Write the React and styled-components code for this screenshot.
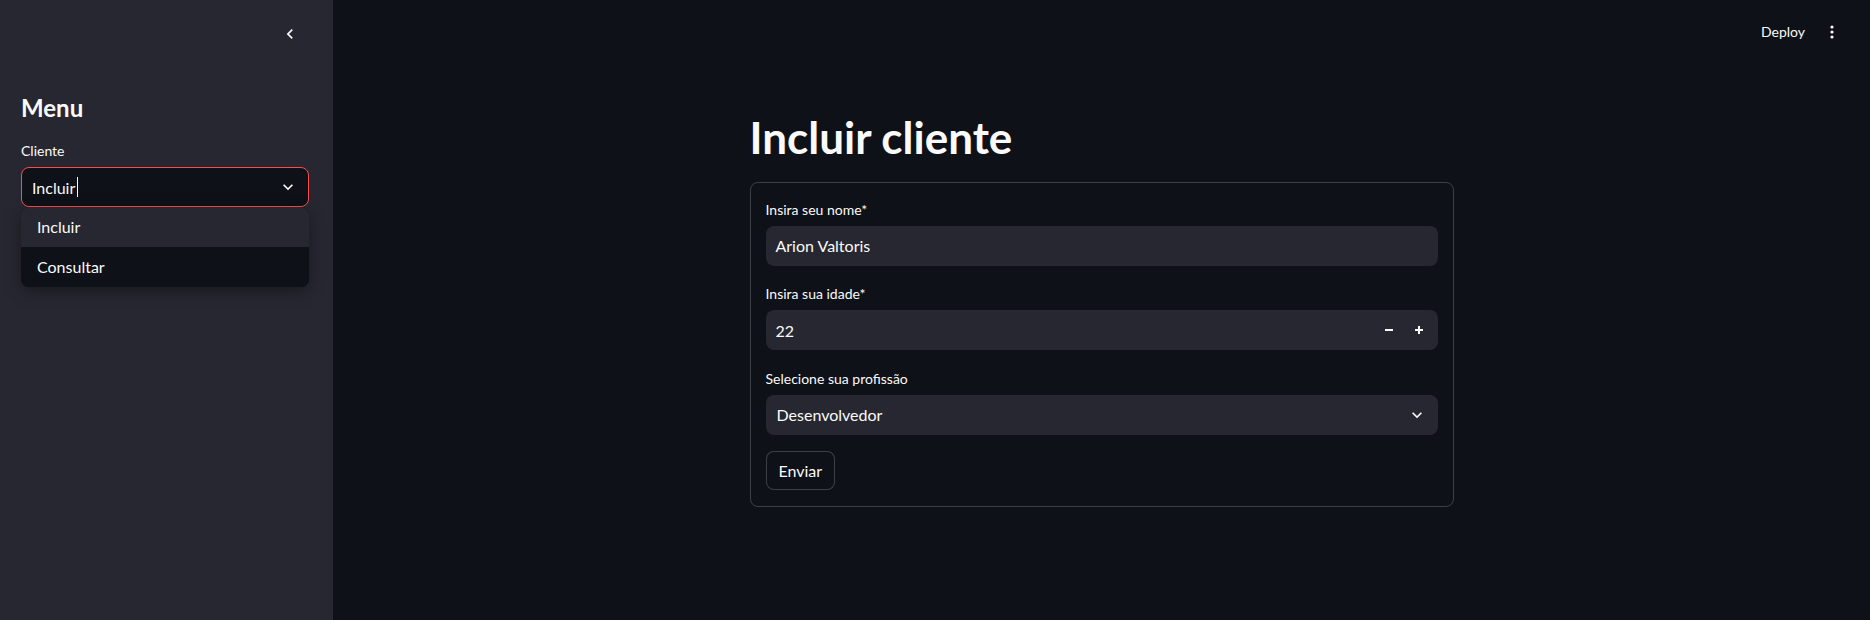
import React from 'react';
import styled, { createGlobalStyle } from 'styled-components';

const GlobalStyle = createGlobalStyle`
  html, body {
    margin: 0;
    padding: 0;
    background: #0e1117;
    color: #fafafa;
    font-family: "Source Sans Pro", Lato, "Noto Sans", sans-serif;
  }
  * {
    box-sizing: border-box;
  }
`;

const Page = styled.div`
  display: flex;
  height: 100vh;
  overflow: hidden;
`;

const Sidebar = styled.aside`
  width: 333px;
  flex-shrink: 0;
  background: #262730;
`;

const SidebarTop = styled.div`
  height: 68px;
  display: flex;
  align-items: center;
  justify-content: flex-end;
  padding-right: 29px;
`;

const IconButton = styled.button`
  width: ${(p) => p.$size || 28}px;
  height: ${(p) => p.$size || 28}px;
  display: flex;
  align-items: center;
  justify-content: center;
  padding: 0;
  border: none;
  background: transparent;
  color: #fafafa;
  cursor: pointer;
`;

const SidebarBody = styled.div`
  padding: 0 24px 0 21px;
`;

const SidebarTitle = styled.h2`
  margin: 25px 0 17px;
  font-size: 24px;
  line-height: 29px;
  font-weight: 700;
  color: #fafafa;
`;

const Label = styled.div`
  font-size: 14px;
  line-height: 24px;
  height: 24px;
  margin-bottom: 4px;
  color: #fafafa;
`;

const SelectWrap = styled.div`
  position: relative;
`;

const Field = styled.div`
  height: 40px;
  display: flex;
  align-items: center;
  padding: 0 ${(p) => (p.$select ? 10 : 9)}px 0 ${(p) => (p.$select ? 10 : 9)}px;
  border-radius: 8px;
  border: 1px solid ${(p) => (p.$focused ? '#ff4b4b' : 'transparent')};
  background: ${(p) => (p.$dark ? '#0e1117' : '#262730')};
  font-size: 16px;
  color: #fafafa;
`;

const FieldValue = styled.span`
  flex: 1;
  display: flex;
  align-items: center;
  white-space: nowrap;
`;

const Caret = styled.span`
  display: inline-block;
  width: 1px;
  height: 20px;
  margin-left: 2px;
  background: #fafafa;
`;

const Menu = styled.ul`
  position: absolute;
  top: 100%;
  left: 0;
  right: 0;
  margin: 0;
  padding: 0;
  list-style: none;
  border-radius: 8px;
  overflow: hidden;
  background: #0e1117;
  box-shadow: 0 4px 16px rgba(0, 0, 0, 0.35);
  z-index: 2;
`;

const Option = styled.li`
  height: 40px;
  display: flex;
  align-items: center;
  padding: 0 0 2px 16px;
  font-size: 16px;
  color: #fafafa;
  background: ${(p) => (p.$active ? '#262730' : '#0e1117')};
`;

const Main = styled.main`
  flex: 1;
  display: flex;
  flex-direction: column;
`;

const Header = styled.header`
  height: 64px;
  display: flex;
  align-items: center;
  justify-content: flex-end;
  gap: 13px;
  padding-right: 28px;
`;

const DeployButton = styled.button`
  border: none;
  background: transparent;
  color: #fafafa;
  font-family: inherit;
  font-size: 14px;
  line-height: 20px;
  padding: 0 4px;
`;

const Content = styled.div`
  width: 704px;
  margin: 0 auto;
  padding-top: 47px;
`;

const Title = styled.h1`
  margin: 0 0 18px;
  font-size: 44px;
  line-height: 1.2;
  font-weight: 700;
  color: #fafafa;
`;

const Form = styled.form`
  border: 1px solid rgba(250, 250, 250, 0.2);
  border-radius: 8px;
  padding: 15px 15px 16px;
  display: flex;
  flex-direction: column;
  gap: 16.5px;
`;

const Steps = styled.div`
  display: flex;
  margin-right: -6px;
`;

const StepButton = styled.button`
  width: 30px;
  height: 38px;
  display: flex;
  align-items: center;
  justify-content: center;
  padding: 0;
  border: none;
  background: transparent;
  color: #fafafa;
`;

const SubmitButton = styled.button`
  align-self: flex-start;
  height: 38.4px;
  padding: 0 12px;
  border: 1px solid rgba(250, 250, 250, 0.2);
  border-radius: 8px;
  background: #0e1117;
  color: #fafafa;
  font-family: inherit;
  font-size: 16px;
`;

const ChevronDown = () => (
  <svg width="20" height="20" viewBox="0 0 24 24" fill="currentColor">
    <path d="M16.59 8.59L12 13.17 7.41 8.59 6 10l6 6 6-6z" />
  </svg>
);

const ChevronLeft = () => (
  <svg width="20" height="20" viewBox="0 0 24 24" fill="currentColor">
    <path d="M15.41 7.41L14 6l-6 6 6 6 1.41-1.41L10.83 12z" />
  </svg>
);

const Kebab = () => (
  <svg width="16" height="16" viewBox="0 0 16 16" fill="currentColor">
    <circle cx="8" cy="3" r="1.6" />
    <circle cx="8" cy="8" r="1.6" />
    <circle cx="8" cy="13" r="1.6" />
  </svg>
);

const Minus = () => (
  <svg width="10" height="10" viewBox="0 0 10 10" fill="currentColor">
    <rect x="1" y="4" width="8" height="2" />
  </svg>
);

const Plus = () => (
  <svg width="10" height="10" viewBox="0 0 10 10" fill="currentColor">
    <rect x="1" y="4" width="8" height="2" />
    <rect x="4" y="1" width="2" height="8" />
  </svg>
);

const App = () => (
  <Page>
    <GlobalStyle />
    <Sidebar>
      <SidebarTop>
        <IconButton>
          <ChevronLeft />
        </IconButton>
      </SidebarTop>
      <SidebarBody>
        <SidebarTitle>Menu</SidebarTitle>
        <Label>Cliente</Label>
        <SelectWrap>
          <Field $select $dark $focused>
            <FieldValue>
              Incluir
              <Caret />
            </FieldValue>
            <ChevronDown />
          </Field>
          <Menu>
            <Option $active>Incluir</Option>
            <Option>Consultar</Option>
          </Menu>
        </SelectWrap>
      </SidebarBody>
    </Sidebar>

    <Main>
      <Header>
        <DeployButton>Deploy</DeployButton>
        <IconButton $size={20}>
          <Kebab />
        </IconButton>
      </Header>
      <Content>
        <Title>Incluir cliente</Title>
        <Form onSubmit={(e) => e.preventDefault()}>
          <div>
            <Label>Insira seu nome*</Label>
            <Field>
              <FieldValue>Arion Valtoris</FieldValue>
            </Field>
          </div>
          <div>
            <Label>Insira sua idade*</Label>
            <Field>
              <FieldValue>22</FieldValue>
              <Steps>
                <StepButton type="button">
                  <Minus />
                </StepButton>
                <StepButton type="button">
                  <Plus />
                </StepButton>
              </Steps>
            </Field>
          </div>
          <div>
            <Label>Selecione sua profissão</Label>
            <Field $select>
              <FieldValue>Desenvolvedor</FieldValue>
              <ChevronDown />
            </Field>
          </div>
          <SubmitButton type="submit">Enviar</SubmitButton>
        </Form>
      </Content>
    </Main>
  </Page>
);

export default App;
